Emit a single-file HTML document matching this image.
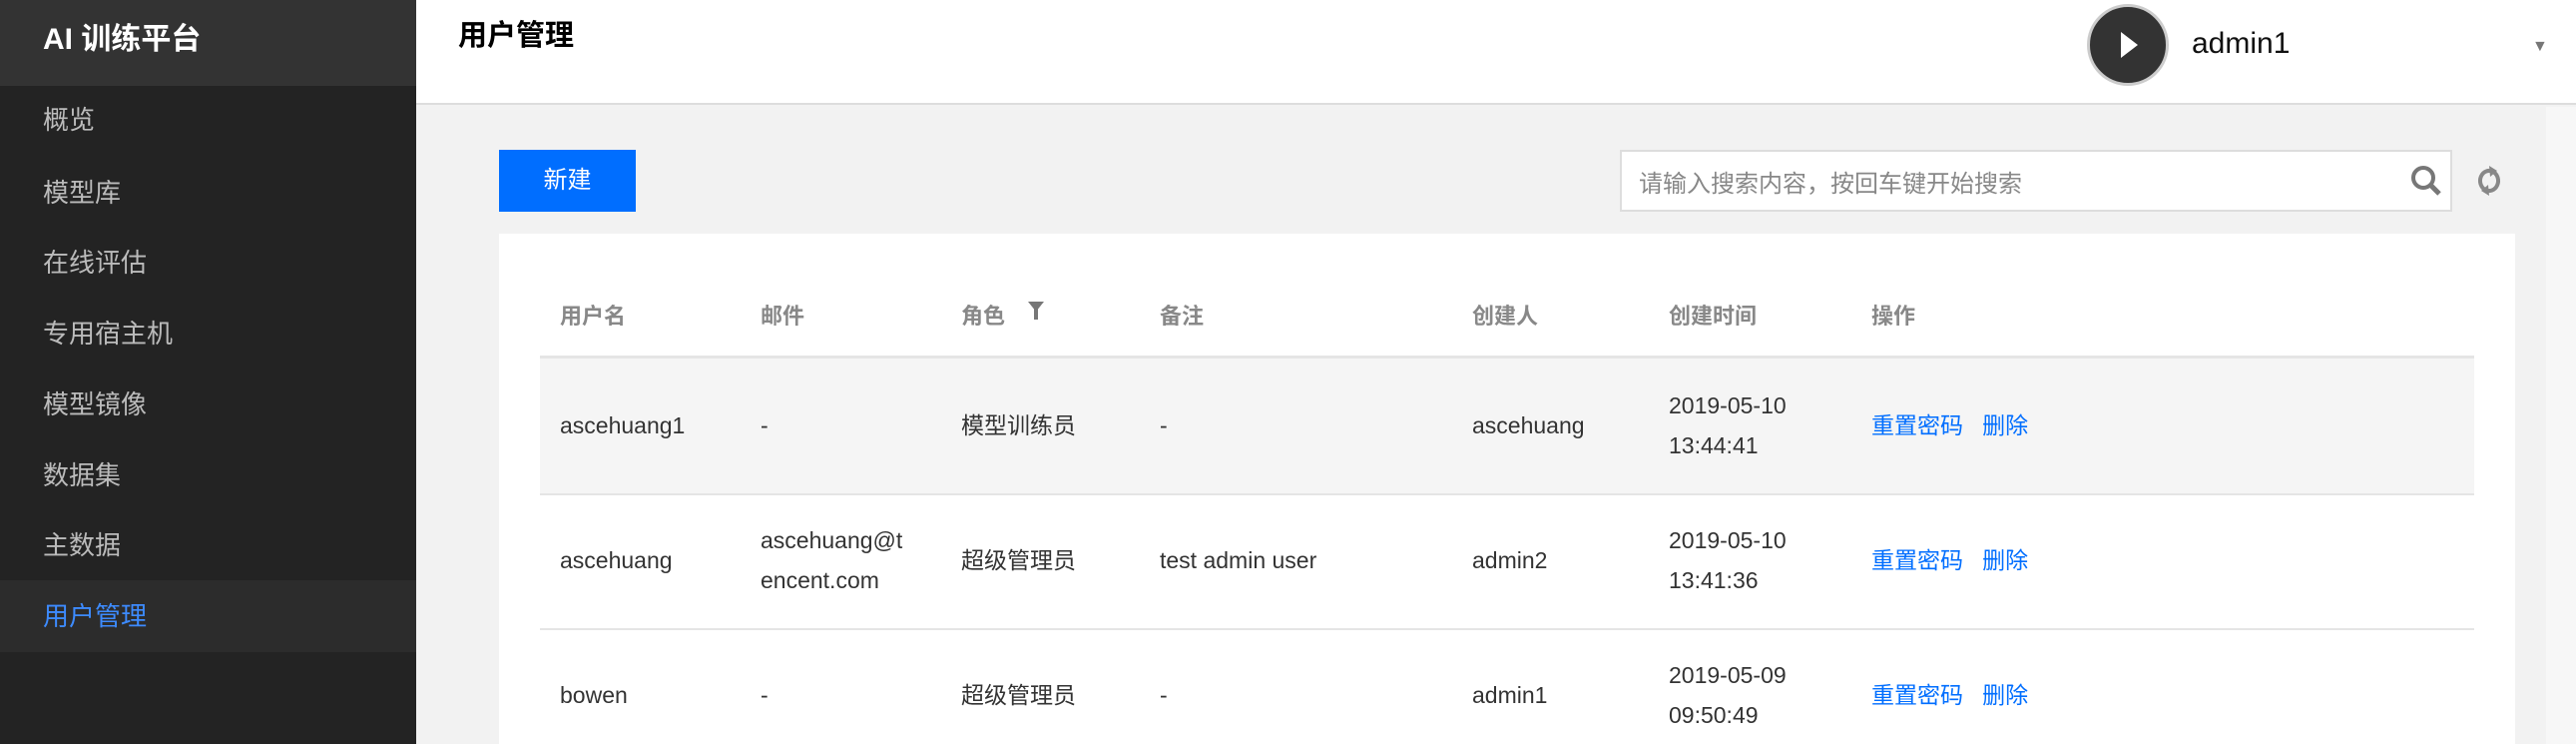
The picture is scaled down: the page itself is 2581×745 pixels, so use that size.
<!DOCTYPE html>
<html><head><meta charset="utf-8"><style>
*{margin:0;padding:0;box-sizing:border-box}
body{width:2581px;height:745px;overflow:hidden;background:#f2f2f2;font-family:"Liberation Sans","Noto Sans CJK SC",sans-serif;position:relative}
.a{position:absolute;white-space:nowrap}
#side{left:0;top:0;width:417px;height:745px;background:#232323}
#sh{left:0;top:0;width:417px;height:86px;background:#333}
.nav{left:43px;font-size:26px;color:#bbb;line-height:30px}
#top{left:417px;top:0;width:2164px;height:105px;background:#fff;border-bottom:2px solid #ddd}
.th{font-size:22px;color:#888;font-weight:bold;top:299px}
.td{font-size:23px;color:#333;line-height:40px}
.lk{font-size:23px;color:#006eff;line-height:40px}
.line{left:541px;width:1938px;height:2px;background:#e5e5e5}
</style></head><body>
<div class="a" id="side"></div>
<div class="a" id="sh"></div>
<div class="a" style="left:43px;top:14px;font-size:30px;color:#fff;font-weight:bold">AI 训练平台</div>
<div class="a nav" style="top:105px">概览</div>
<div class="a nav" style="top:178px">模型库</div>
<div class="a nav" style="top:248px">在线评估</div>
<div class="a nav" style="top:319px">专用宿主机</div>
<div class="a nav" style="top:390px">模型镜像</div>
<div class="a nav" style="top:461px">数据集</div>
<div class="a nav" style="top:531px">主数据</div>
<div class="a" style="left:0;top:581px;width:417px;height:72px;background:#2c2c2c"></div>
<div class="a nav" style="top:602px;color:#3d8bff">用户管理</div>

<div class="a" id="top"></div>
<div class="a" style="left:459px;top:12px;font-size:29px;font-weight:bold;color:#000">用户管理</div>
<div class="a" style="left:2091px;top:4px;width:82px;height:82px;border-radius:50%;background:#333;border:3px solid #ccc"></div>
<div class="a" style="left:2125px;top:32px;width:0;height:0;border-left:17px solid #fff;border-top:13px solid transparent;border-bottom:13px solid transparent"></div>
<div class="a" style="left:2196px;top:27px;font-size:30px;color:#111">admin1</div>
<div class="a" style="left:2537px;top:38px;font-size:16px;color:#777">▼</div>
<div class="a" style="left:2551px;top:107px;width:30px;height:638px;background:#f7f7f7"></div>

<div class="a" style="left:500px;top:150px;width:137px;height:62px;background:#006eff;color:#fff;font-size:24px;text-align:center;line-height:62px">新建</div>
<div class="a" style="left:1623px;top:150px;width:834px;height:62px;background:#fff;border:2px solid #ddd"></div>
<div class="a" style="left:1642px;top:164px;font-size:24px;color:#888">请输入搜索内容，按回车键开始搜索</div>
<svg class="a" style="left:2415px;top:165px" width="32" height="32" viewBox="0 0 32 32"><circle cx="13" cy="13" r="10" fill="none" stroke="#777" stroke-width="4"/><path d="M20 20l9 9" stroke="#777" stroke-width="5"/></svg>
<svg class="a" style="left:2480px;top:163px" width="28" height="36" viewBox="0 0 28 36"><path d="M18 9A9 10 0 0 0 10 27" fill="none" stroke="#888" stroke-width="4"/><path d="M10 27A9 10 0 0 0 18 9" fill="none" stroke="#888" stroke-width="4"/><path d="M14 3l8 5-7 6z M14 33l-8-5 7-6z" fill="#888"/></svg>

<div class="a" style="left:500px;top:234px;width:2020px;height:511px;background:#fff"></div>
<div class="a th" style="left:561px">用户名</div>
<div class="a th" style="left:762px">邮件</div>
<div class="a th" style="left:963px">角色</div>
<div class="a" style="left:1030px;top:302px;width:0;height:0;border-top:10px solid #777;border-left:8px solid transparent;border-right:8px solid transparent"></div>
<div class="a" style="left:1036px;top:308px;width:4px;height:12px;background:#777"></div>
<div class="a th" style="left:1162px">备注</div>
<div class="a th" style="left:1475px">创建人</div>
<div class="a th" style="left:1672px">创建时间</div>
<div class="a th" style="left:1875px">操作</div>
<div class="a line" style="top:356px;height:3px"></div>
<div class="a" style="left:541px;top:359px;width:1938px;height:135px;background:#f5f5f5"></div>
<div class="a line" style="top:494px"></div>
<div class="a line" style="top:629px"></div>

<div class="a td" style="left:561px;top:406px">ascehuang1</div>
<div class="a td" style="left:762px;top:406px">-</div>
<div class="a td" style="left:963px;top:406px">模型训练员</div>
<div class="a td" style="left:1162px;top:406px">-</div>
<div class="a td" style="left:1475px;top:406px">ascehuang</div>
<div class="a td" style="left:1672px;top:386px">2019-05-10<br>13:44:41</div>
<div class="a lk" style="left:1875px;top:406px">重置密码&nbsp;&nbsp;&nbsp;删除</div>

<div class="a td" style="left:561px;top:541px">ascehuang</div>
<div class="a td" style="left:762px;top:521px">ascehuang@t<br>encent.com</div>
<div class="a td" style="left:963px;top:541px">超级管理员</div>
<div class="a td" style="left:1162px;top:541px">test admin user</div>
<div class="a td" style="left:1475px;top:541px">admin2</div>
<div class="a td" style="left:1672px;top:521px">2019-05-10<br>13:41:36</div>
<div class="a lk" style="left:1875px;top:541px">重置密码&nbsp;&nbsp;&nbsp;删除</div>

<div class="a td" style="left:561px;top:676px">bowen</div>
<div class="a td" style="left:762px;top:676px">-</div>
<div class="a td" style="left:963px;top:676px">超级管理员</div>
<div class="a td" style="left:1162px;top:676px">-</div>
<div class="a td" style="left:1475px;top:676px">admin1</div>
<div class="a td" style="left:1672px;top:656px">2019-05-09<br>09:50:49</div>
<div class="a lk" style="left:1875px;top:676px">重置密码&nbsp;&nbsp;&nbsp;删除</div>
</body></html>
